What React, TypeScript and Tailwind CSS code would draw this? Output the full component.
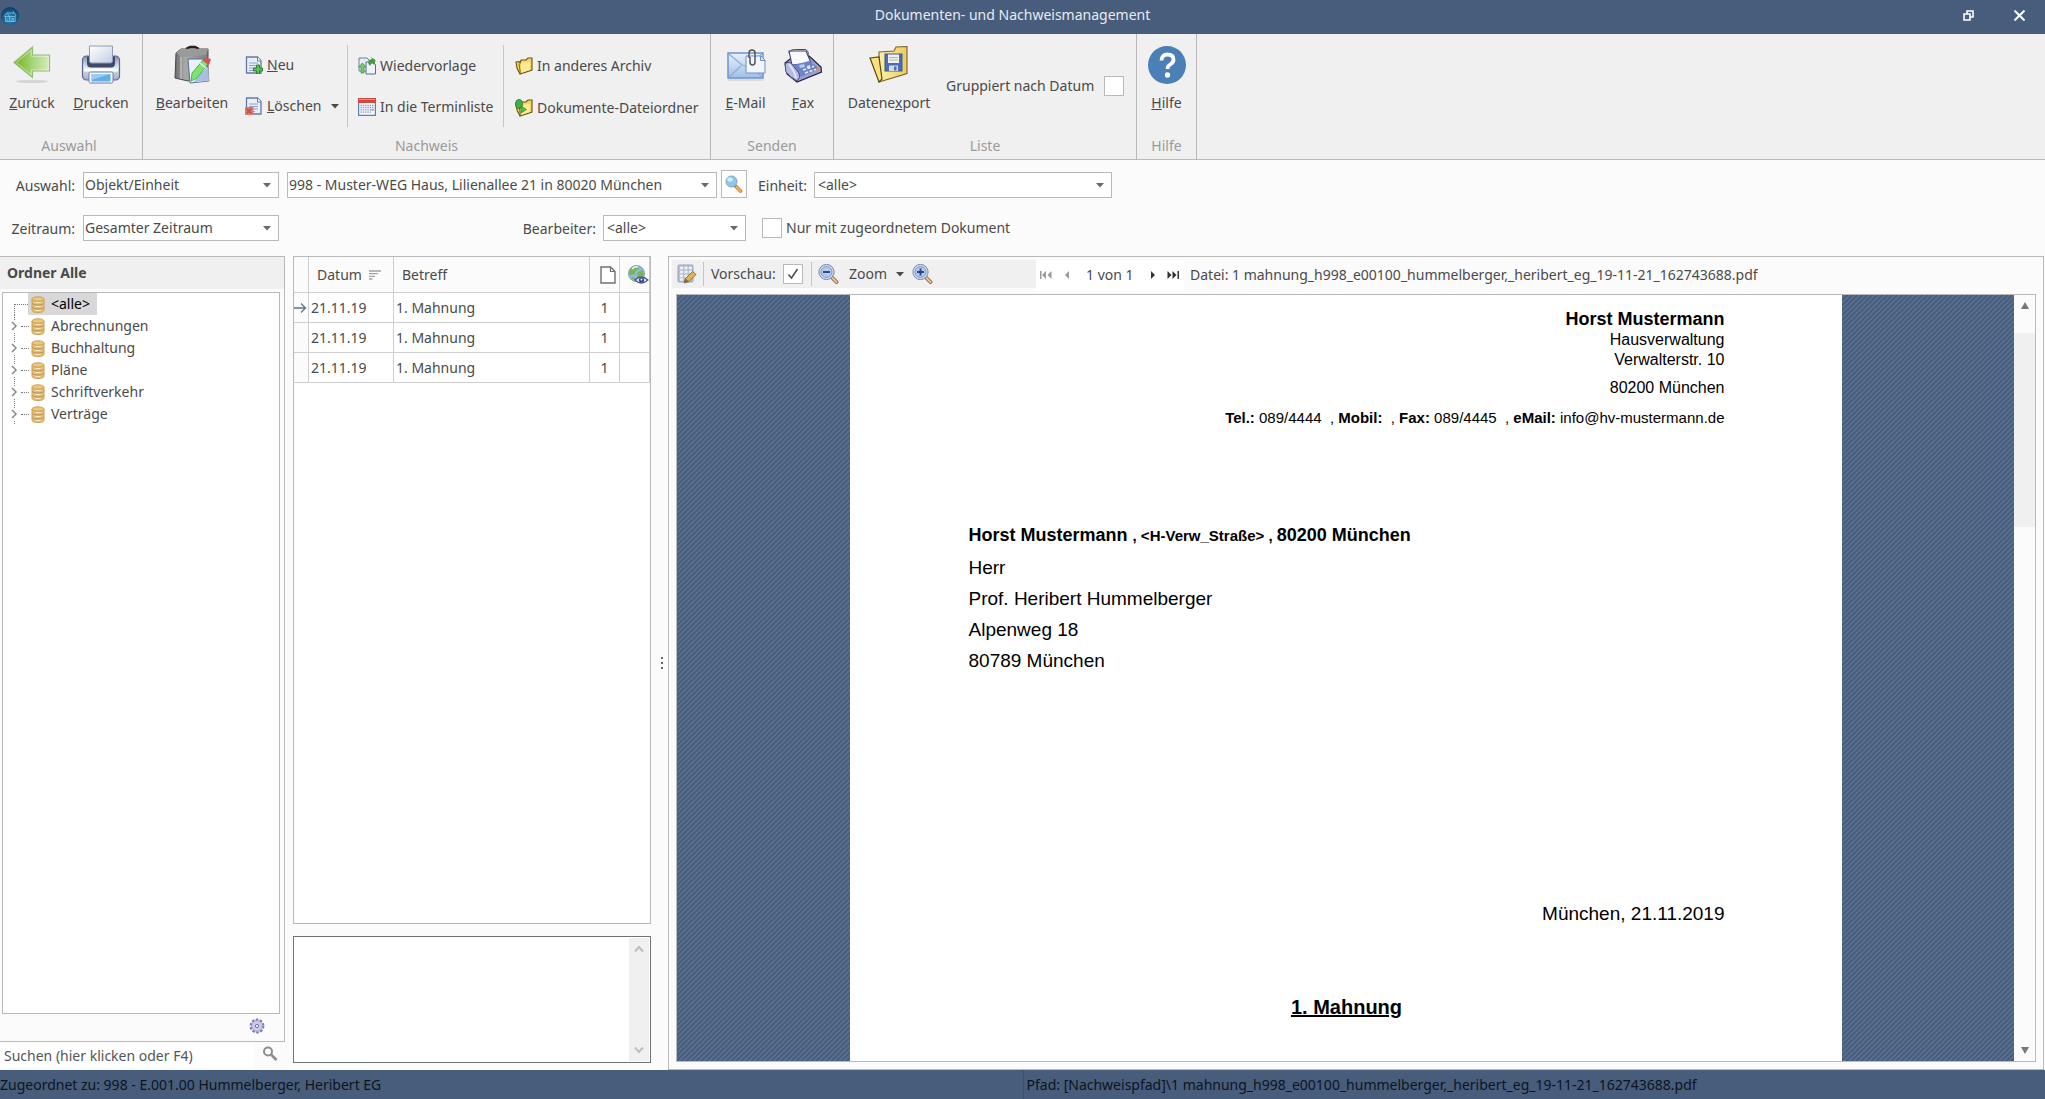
import { useState } from "react";
import type { ReactNode } from "react";
import clsx from "clsx";

const folders = ["Abrechnungen", "Buchhaltung", "Pläne", "Schriftverkehr", "Verträge"];

const records = [
  { id: 1, date: "21.11.19", subject: "1. Mahnung", files: 1 },
  { id: 2, date: "21.11.19", subject: "1. Mahnung", files: 1 },
  { id: 3, date: "21.11.19", subject: "1. Mahnung", files: 1 },
];

/* ---------- icons ---------- */

function AppLogo() {
  return (
    <svg viewBox="0 0 20 20" className="h-5 w-5">
      <defs>
        <radialGradient id="logo" cx="50%" cy="65%" r="60%">
          <stop offset="0" stopColor="#2f8fc4" />
          <stop offset="1" stopColor="#0d3f6b" />
        </radialGradient>
      </defs>
      <circle cx="10" cy="9" r="9" fill="url(#logo)" />
      <path d="M4 9.500 7 6h7.500l1.500 3M4.500 9.500h5v5h-4v-5M9.500 9.500 7.200 6.200M9.500 9.500h5.700v5H9.500M7 11.500v3M12 14.500v-3h1.600v3M13.500 6V4.500" fill="none" stroke="#7fc4e6" strokeWidth="0.8" />
    </svg>
  );
}

function BackIcon() {
  return (
    <svg viewBox="0 0 40 40" className="h-10 w-10">
      <defs>
        <linearGradient id="back" x1="0" x2="1">
          <stop offset="0" stopColor="#6fb21c" />
          <stop offset="0.55" stopColor="#a9d67c" />
          <stop offset="1" stopColor="#d5ebc0" />
        </linearGradient>
      </defs>
      <ellipse cx="20" cy="36.5" rx="16" ry="1.6" fill="#c9c9c9" opacity="0.7" />
      <path d="M2 17.5 20.5 2v8h17v16h-17v6.5Z" fill="url(#back)" stroke="#93be70" strokeWidth="1.2" />
      <path d="M4.5 17.5 19.3 5v6.300h17v13.500h-17V30Z" fill="none" stroke="#fff" strokeOpacity="0.45" />
    </svg>
  );
}

function PrinterIcon() {
  return (
    <svg viewBox="0 0 40 40" className="h-10 w-10">
      <defs>
        <linearGradient id="prBody" x1="0" y1="0" x2="0" y2="1">
          <stop offset="0" stopColor="#7f8cb0" />
          <stop offset="0.45" stopColor="#dfe4f0" />
          <stop offset="1" stopColor="#a3aecb" />
        </linearGradient>
        <linearGradient id="prPaper" x1="0" y1="0" x2="1" y2="1">
          <stop offset="0" stopColor="#ffffff" />
          <stop offset="1" stopColor="#c3cde2" />
        </linearGradient>
      </defs>
      <rect x="1.500" y="11" width="37" height="24" rx="4" fill="url(#prBody)" stroke="#5d6b93" strokeWidth="1.2" />
      <path d="M6 11.5h28v7q0 4-4 4H10q-4 0-4-4Z" fill="#3d4968" />
      <path d="M8.500 1h23v15q0 2-2 2h-19q-2 0-2-2Z" fill="url(#prPaper)" stroke="#8f9bbb" />
      <path d="M3 25h34" stroke="#fff" strokeWidth="3" />
      <rect x="8" y="27" width="24" height="11" rx="1.500" fill="#f5f9fd" stroke="#6f7da5" />
      <path d="M10.500 29h19v7.500h-19Z" fill="#5fb0e4" />
      <path d="M10.500 29h19l-19 6Z" fill="#96cdf0" />
    </svg>
  );
}

function EditIcon() {
  return (
    <svg viewBox="0 0 40 40" className="h-10 w-10">
      <defs>
        <linearGradient id="case" x1="0" x2="1">
          <stop offset="0" stopColor="#6a6a6a" />
          <stop offset="0.3" stopColor="#a9a9a9" />
          <stop offset="1" stopColor="#7e7e7e" />
        </linearGradient>
      </defs>
      <path d="M15 5V3.500L18 2h5l3 1.500V5" fill="none" stroke="#222" strokeWidth="2.400" />
      <path d="M4 8 9 4h27v27l-20 5-13-3Z" fill="url(#case)" stroke="#4a4a4a" />
      <path d="M4 8 9 4h27l-2 6-24 2Z" fill="#9a9a9a" />
      <path d="M9 12v22" stroke="#d0d0d0" />
      <path d="M16 14h18l3 22-19 2Z" fill="#e9f1fb" stroke="#5c6f9b" />
      <path d="M26 30 36 22l1 14-15 1Z" fill="#a9bfe0" />
      <path d="m19 36 1-8 11-13 5 4-11 14Z" fill="#7de36f" stroke="#3aa83a" strokeWidth="0.8" />
      <path d="m30 15 4-2 5 1-2 6Z" fill="#d9514c" />
      <path d="m28 18 5.500 4.500" stroke="#f3f3f3" strokeWidth="1.500" />
    </svg>
  );
}

function DocBase() {
  return (
    <>
      <path d="M1.500 1h11L16 4.500V17H1.500Z" fill="#e9eef7" stroke="#6678a5" strokeWidth="1.300" />
      <path d="M12.500 1v4H16" fill="#fff" stroke="#6678a5" />
      <path d="M4 7h9M4 9.500h9M4 12h9M4 14.500h6" stroke="#93a0c0" />
    </>
  );
}

function NewDocIcon() {
  return (
    <svg viewBox="0 0 18 18" className="h-[18px] w-[18px]">
      <DocBase />
      <path d="M11.500 9h3v3h3v3h-3v3h-3v-3h-3v-3h3Z" fill="#5fbf58" stroke="#1f7a24" strokeWidth="0.9" />
    </svg>
  );
}

function DeleteDocIcon() {
  return (
    <svg viewBox="0 0 18 18" className="h-[18px] w-[18px]">
      <DocBase />
      <path d="M0 10h8.500v8H0Z" fill="#e07a6f" />
      <path d="m1.500 11.500 5 5M6.500 11.500l-5 5" stroke="#c4574d" strokeWidth="1.800" />
    </svg>
  );
}

function ResubmitIcon() {
  return (
    <svg viewBox="0 0 18 18" className="h-[18px] w-[18px]">
      <path d="M1 1h8l2 2v11H1Z" fill="#e6ecf6" stroke="#6f7ea5" />
      <path d="M8 5h7l2.500 2.500V17H8Z" fill="#eef2f9" stroke="#5d6c94" />
      <path d="M10 6q1-4 4-4l-1-2 4.500 3-1 5-2-1.500Q13 6 12 9Z" fill="#4b9a48" />
      <path d="m.500 10 4-4 3.500 4H6v6H3v-6Z" fill="#7bc578" stroke="#3b8c3c" strokeWidth="0.7" />
    </svg>
  );
}

function CalendarIcon() {
  return (
    <svg viewBox="0 0 18 18" className="h-[18px] w-[18px]">
      <rect x="0.600" y="0.600" width="16.800" height="16.800" fill="#f3f6fb" stroke="#5c7fb5" strokeWidth="1.200" />
      <path d="M0 0h18v5H0Z" fill="#cf4a3c" />
      <path d="M1 1.500h16" stroke="#e99087" />
      <path d="M2.500 7.500h13M2.500 9.700h13M2.500 11.900h13M2.500 14.100h11" stroke="#8fa2cf" strokeDasharray="1.400 0.900" strokeWidth="1.300" />
      <path d="M13 11.900h3" stroke="#e48e84" strokeWidth="1.300" />
    </svg>
  );
}

function FolderIcon({ arrow = false }: { arrow?: boolean }) {
  return (
    <svg viewBox="0 0 18 18" className="h-[18px] w-[18px]">
      <path d="M1 5l3-.500 1 1.500 1-3h5l2-2h4v12L5 17 2 11Z" fill="#f3d665" stroke="#6b5212" strokeWidth="1.100" />
      <path d="m6 6 9-1v8l-9 3Z" fill="#fbea95" />
      <path d="M4 6.500 5.500 17" stroke="#8a6a14" />
      {arrow && (
        <>
          <ellipse cx="4" cy="5" rx="3.500" ry="4.500" fill="#46ad45" stroke="#226f25" strokeWidth="0.7" />
          <path d="M6 7 11.500 10.500 6 14Z" fill="#4fc04b" stroke="#2a7f2b" strokeWidth="0.7" />
        </>
      )}
    </svg>
  );
}

function MailIcon() {
  return (
    <svg viewBox="0 0 40 40" className="h-10 w-10">
      <defs>
        <linearGradient id="mail" x1="0" y1="0" x2="0" y2="1">
          <stop offset="0" stopColor="#e8f1fc" />
          <stop offset="1" stopColor="#9fc0e8" />
        </linearGradient>
      </defs>
      <path d="M2 34h36v2H2Z" fill="#c9cdd6" opacity="0.6" />
      <rect x="2" y="8" width="35" height="25" fill="url(#mail)" stroke="#6e92ca" strokeWidth="1.500" />
      <path d="m3 9 13 11q3 2 6 0L36 9M3 32l12-11M36 32 25 21" fill="none" stroke="#8fabd6" strokeWidth="1.200" />
      <path d="M20 11h15l4 4v13H20Z" fill="#f1f6fd" stroke="#6f90c6" />
      <path d="M34.500 11v4.500H39" fill="#cfdff4" stroke="#6f90c6" />
      <path d="M23 13V8q0-3 3-3t3 3v9q0 3-2.500 3T24 17v-5" fill="none" stroke="#555" strokeWidth="1.500" />
    </svg>
  );
}

function FaxIcon() {
  return (
    <svg viewBox="0 0 40 40" className="h-10 w-10">
      <path d="M2 18 7 14l19-3 12 11 .500 5L14 37 4 29Z" fill="#9aa0d0" stroke="#23264a" strokeWidth="1.200" />
      <path d="M6 6h17l5 12-19 2Z" fill="#f7f9fd" stroke="#40466c" strokeWidth="1.100" />
      <path d="M5.500 7.500q3-3.500 7-3h10q3 1 3 5" fill="none" stroke="#40466c" />
      <path d="m11 20 15-4 11 8-20 8Z" fill="#6f84c6" />
      <path d="m16 20 5-1 1 3-5 1Z" fill="#b3c8f3" />
      <path d="m20 25 3-1m1.500-.500 3-1m1.500-.500 2-.600M22 28l3-1m1.500-.500 3-1m1.500-.500 2-.600M24 22l3-1" stroke="#e5ecff" strokeWidth="1.800" />
      <path d="M2 19q3-3 6-1l8 10q2 5-2 8-6-3-11-9Z" fill="#b4bbe2" stroke="#474d80" />
      <path d="M6 19q6 8 7 14" fill="none" stroke="#e3e7f7" strokeWidth="2" />
      <circle cx="35" cy="24" r="1.800" fill="#e7885d" />
    </svg>
  );
}

function ExportIcon() {
  return (
    <svg viewBox="0 0 40 40" className="h-10 w-10">
      <defs>
        <linearGradient id="exp" x1="0" x2="1">
          <stop offset="0" stopColor="#fdf0a6" />
          <stop offset="1" stopColor="#edcb60" />
        </linearGradient>
      </defs>
      <path d="m10 7 15-1 2-4 11-.500v27L10 37Z" fill="url(#exp)" stroke="#7b6324" strokeWidth="1.100" />
      <path d="m1 13 9-1 3 22-3 3Z" fill="#f9e27c" stroke="#5a4714" strokeWidth="1.200" />
      <rect x="16" y="9" width="17" height="17" fill="#4a6fb6" stroke="#3a5794" />
      <rect x="19" y="9.500" width="11" height="8.500" fill="#f2f2f2" />
      <path d="M20 12.500h9M20 15h9" stroke="#b1b1b1" />
      <rect x="20" y="20.500" width="9" height="5.500" fill="#d9d9d9" />
      <rect x="25" y="21.500" width="2.500" height="4" fill="#4a6fb6" />
    </svg>
  );
}

function HelpIcon() {
  return (
    <svg viewBox="0 0 40 40" className="h-10 w-10">
      <circle cx="20" cy="20" r="19" fill="#4a7fb7" />
      <path d="M14.500 15.500q0-6 6-6t6 5q0 3-3.300 5-2.700 1.600-2.700 4.500" fill="none" stroke="#fff" strokeWidth="3.800" />
      <circle cx="20.500" cy="30" r="2.700" fill="#fff" />
    </svg>
  );
}

function LookupIcon() {
  return (
    <svg viewBox="0 0 18 18" className="h-[18px] w-[18px]">
      <path d="m10.500 11 5 5" stroke="#c77a2a" strokeWidth="3.600" strokeLinecap="round" />
      <path d="m11.500 12 4 4" stroke="#f2b467" strokeWidth="1.800" strokeLinecap="round" />
      <circle cx="6.500" cy="6.500" r="5.500" fill="#8cc6e8" stroke="#79a8c6" />
      <ellipse cx="5" cy="4.500" rx="2.800" ry="2" fill="#d8effb" />
    </svg>
  );
}

function ZoomIcon({ plus = false }: { plus?: boolean }) {
  return (
    <svg viewBox="0 0 21 20" className="h-5 w-[21px]">
      <path d="m14 13.500 4.500 4.500" stroke="#8b5f35" strokeWidth="3.800" strokeLinecap="round" />
      <path d="m14.500 14 4 4" stroke="#ecc59a" strokeWidth="2" strokeLinecap="round" />
      <circle cx="8.500" cy="8" r="7.600" fill="#cdd9ee" stroke="#7c88a6" />
      <circle cx="8.500" cy="8" r="5.400" fill="#b3cbee" stroke="#7d98c6" />
      <path d={plus ? "M5 8h7M8.500 4.500v7" : "M5 8h7"} stroke="#27457f" strokeWidth="1.900" />
    </svg>
  );
}

function DesignIcon() {
  return (
    <svg viewBox="0 0 20 20" className="h-5 w-5">
      <rect x="1" y="1" width="15" height="17" rx="1" fill="#b7c1d6" stroke="#98a3bd" />
      <path d="M3 4h3M7.500 4h3M12 4h3M3 8h3M7.500 8h3M12 8h3M3 12h3M7.500 12h3M12 12h3M3 15.500h3" stroke="#eef2f8" strokeWidth="2.400" />
      <path d="m7 19 1.500-4.500L15.500 7.500l3.500 3-7 7Z" fill="#e2b455" stroke="#866524" strokeWidth="0.900" />
      <path d="m7 19 1.500-4.500 3.500 3Z" fill="#7b6a54" />
    </svg>
  );
}

function BarrelIcon() {
  return (
    <svg viewBox="0 0 14 17" className="h-[17px] w-[14px] shrink-0">
      <path d="M1 3v11q0 2.500 6 2.500t6-2.500V3Z" fill="#e9bf68" stroke="#c9a05e" />
      <ellipse cx="7" cy="3" rx="6" ry="2.200" fill="#eec778" stroke="#c9a05e" />
      <path d="M1 7q0 2 6 2t6-2M1 11q0 2 6 2t6-2" fill="none" stroke="#b99360" />
      <path d="M4.500 6.500h5M4.500 10.500h5M4.500 14.500h5" stroke="#f8e7bf" />
    </svg>
  );
}

function GlobeIcon() {
  return (
    <svg viewBox="0 0 21 20" className="h-5 w-[21px]">
      <circle cx="8.500" cy="8.500" r="8" fill="#8fbcd9" stroke="#6d8f8c" strokeWidth="0.8" />
      <path d="M2 5q4-5 8-4l1 3-3 2-1 3-4 1-2-1ZM10 7l4-2 2 4-3 5-4-2ZM3 12l4 1 1 3q-3-.500-5-4Z" fill="#7bb35c" />
      <path d="M4 4q3-3 6-2" stroke="#e8f6ff" strokeWidth="1.600" fill="none" />
      <path d="M7 15q6-6 13 0-7 6-13 0Z" fill="#e9edf8" stroke="#4a5690" strokeWidth="1.200" />
      <circle cx="13.500" cy="15" r="2.600" fill="#34468c" />
      <circle cx="13.500" cy="14.500" r="1" fill="#fff" />
    </svg>
  );
}

function GearIcon() {
  return (
    <svg viewBox="0 0 16 16" className="h-4 w-4">
      <circle cx="8" cy="8" r="6" fill="none" stroke="#7a7ab0" strokeWidth="2.800" strokeDasharray="2.400 1.370" />
      <circle cx="8" cy="8" r="5.400" fill="#c9c9e8" stroke="#9c9cca" strokeWidth="0.800" />
      <circle cx="8" cy="8" r="1.600" fill="#fff" stroke="#6c6ca3" />
    </svg>
  );
}

function Caret({ className }: { className?: string }) {
  return (
    <svg viewBox="0 0 8 5" className={clsx("h-[5px] w-2", className)}>
      <path d="M0 0h8L4 4.500Z" fill="currentColor" />
    </svg>
  );
}

function NavIcon({ d, className }: { d: string; className?: string }) {
  return (
    <svg viewBox="0 0 12 10" className={clsx("h-[10px] w-3", className)}>
      <path d={d} fill="currentColor" />
    </svg>
  );
}

// diagonal hatching behind the page, 5px repeat
function Hatching() {
  return (
    <svg className="absolute inset-0 h-full w-full" shapeRendering="crispEdges">
      <pattern id="hatch" width="5" height="5" patternUnits="userSpaceOnUse">
        <path d="M0 0h5v5H0Z" fill="#566e8c" />
        <path d="M4 0h1v1H4ZM3 1h1v1H3ZM2 2h1v1H2ZM1 3h1v1H1ZM0 4h1v1H0Z" fill="#435878" />
        <path d="M0 0h1v1H0ZM4 1h1v1H4ZM3 2h1v1H3ZM2 3h1v1H2ZM1 4h1v1H1Z" fill="#485e7d" />
      </pattern>
      <rect width="100%" height="100%" fill="url(#hatch)" />
    </svg>
  );
}

/* ---------- controls ---------- */

function RibbonGroup({ title, className, children }: { title: string; className?: string; children: ReactNode }) {
  return (
    <section className={clsx("flex flex-col border-r border-[#b9b9b9] pb-[3px]", className)}>
      <div className="flex flex-1 items-start pt-[11px]">{children}</div>
      <h2 className="text-center leading-5 text-[#9a9a9a]">{title}</h2>
    </section>
  );
}

function BigButton({ icon, className, children }: { icon: ReactNode; className?: string; children: ReactNode }) {
  return (
    <button type="button" className={clsx("flex flex-col items-center gap-2 whitespace-nowrap", className)}>
      {icon}
      <span className="leading-5">{children}</span>
    </button>
  );
}

function SmallButton({ icon, children }: { icon: ReactNode; children: ReactNode }) {
  return (
    <button type="button" className="flex h-[42px] items-center gap-1 whitespace-nowrap">
      {icon}
      <span>{children}</span>
    </button>
  );
}

function Select({ id, value, className, pad = "pl-[1px]" }: { id: string; value: string; className?: string; pad?: string }) {
  return (
    <div className={clsx("relative h-[26px]", className)}>
      <select id={id} className={clsx("h-full w-full appearance-none border border-[#b9b9b9] bg-white leading-6", pad)}>
        <option>{value}</option>
      </select>
      <Caret className="pointer-events-none absolute right-2 top-[11px] text-[#6a6a6a]" />
    </div>
  );
}

function Checkbox({ id, checked, onChange }: { id: string; checked: boolean; onChange: (v: boolean) => void }) {
  return (
    <span className="relative h-5 w-5 shrink-0">
      <input
        id={id}
        type="checkbox"
        checked={checked}
        onChange={e => onChange(e.target.checked)}
        className="block h-5 w-5 appearance-none border border-[#b9b9b9] bg-white"
      />
      {checked && (
        <svg viewBox="0 0 20 20" className="pointer-events-none absolute inset-0 h-5 w-5">
          <path d="m5.500 10.500 3 3.500 6-9" fill="none" stroke="#4a4a4a" strokeWidth="1.500" />
        </svg>
      )}
    </span>
  );
}

/* ---------- page parts ---------- */

function TitleBar() {
  return (
    <header className="grid h-[34px] shrink-0 grid-cols-[1fr_auto_1fr] items-center bg-[#485c7b] pr-5 text-[#e6ebf2]">
      <AppLogo />
      <h1 className="pb-1">Dokumenten- und Nachweismanagement</h1>
      <div className="flex items-center justify-end gap-10 pb-1 text-white">
        <button type="button" aria-label="Verkleinern">
          <svg viewBox="0 0 11 11" className="h-[11px] w-[11px]">
            <path d="M1 4h6v6H1ZM4 4V1h6v6H7" fill="none" stroke="currentColor" strokeWidth="1.600" />
          </svg>
        </button>
        <button type="button" aria-label="Schließen">
          <svg viewBox="0 0 11 11" className="h-[11px] w-[11px]">
            <path d="m.500.500 10 10M10.500.500l-10 10" stroke="currentColor" strokeWidth="2" />
          </svg>
        </button>
      </div>
    </header>
  );
}

function Ribbon() {
  const [grouped, setGrouped] = useState(false);

  return (
    <div className="flex h-[126px] shrink-0 border-b border-[#b9b9b9] bg-[#f0f0f0]">
      <RibbonGroup title="Auswahl" className="w-[143px] pr-1">
        <BigButton icon={<BackIcon />} className="w-16"><u>Z</u>urück</BigButton>
        <BigButton icon={<PrinterIcon />} className="w-[74px]"><u>D</u>rucken</BigButton>
      </RibbonGroup>

      <RibbonGroup title="Nachweis" className="w-[568px]">
        <BigButton icon={<EditIcon />} className="w-[98px]"><u>B</u>earbeiten</BigButton>
        <div className="flex h-[82px] w-[107px] flex-col border-r border-[#c6c6c6] pl-1">
          <SmallButton icon={<NewDocIcon />}><u>N</u>eu</SmallButton>
          <div className="flex items-center gap-[10px]">
            <SmallButton icon={<DeleteDocIcon />}><u>L</u>öschen</SmallButton>
            <button type="button" aria-label="Weitere Löschoptionen"><Caret /></button>
          </div>
        </div>
        <div className="flex h-[82px] w-[156px] flex-col border-r border-[#c6c6c6] pl-[10px]">
          <SmallButton icon={<ResubmitIcon />}>Wiedervorlage</SmallButton>
          <SmallButton icon={<CalendarIcon />}>In die Terminliste</SmallButton>
        </div>
        <div className="flex flex-col pl-[11px]">
          <SmallButton icon={<FolderIcon />}>In anderes Archiv</SmallButton>
          <SmallButton icon={<FolderIcon arrow />}>Dokumente-Dateiordner</SmallButton>
        </div>
      </RibbonGroup>

      <RibbonGroup title="Senden" className="w-[123px]">
        <BigButton icon={<MailIcon />} className="ml-1 w-[61px]"><u>E</u>-Mail</BigButton>
        <BigButton icon={<FaxIcon />} className="w-[54px]"><u>F</u>ax</BigButton>
      </RibbonGroup>

      <RibbonGroup title="Liste" className="w-[303px]">
        <BigButton icon={<ExportIcon />} className="w-[110px]">Datene<u>x</u>port</BigButton>
        <div className="flex h-[82px] flex-1 items-center justify-between pr-3">
          <label htmlFor="grouped" className="whitespace-nowrap pl-[2px]">Gruppiert nach Datum</label>
          <Checkbox id="grouped" checked={grouped} onChange={setGrouped} />
        </div>
      </RibbonGroup>

      <RibbonGroup title="Hilfe" className="w-[60px]">
        <BigButton icon={<HelpIcon />} className="w-full"><u>H</u>ilfe</BigButton>
      </RibbonGroup>
    </div>
  );
}

function Filters() {
  const [onlyLinked, setOnlyLinked] = useState(false);
  const label = "whitespace-nowrap text-right leading-6";

  return (
    <div className="flex shrink-0 flex-col gap-[15px] pb-[15px] pt-[10px]">
      <div className="flex h-7 items-end">
        <label htmlFor="scope" className={clsx(label, "w-[75px]")}>Auswahl:</label>
        <Select id="scope" value="Objekt/Einheit" className="ml-2 w-[196px]" />
        <Select id="object" value="998 - Muster-WEG Haus, Lilienallee 21 in 80020 München" className="ml-2 w-[430px]" />
        <button type="button" aria-label="Objekt suchen" className="ml-1 flex h-7 w-[26px] items-center justify-center border border-[#b9b9b9] bg-white">
          <LookupIcon />
        </button>
        <label htmlFor="unit" className={clsx(label, "w-[60px]")}>Einheit:</label>
        <Select id="unit" value="<alle>" className="ml-[7px] w-[298px]" pad="pl-[3px]" />
      </div>
      <div className="flex h-7 items-end">
        <label htmlFor="period" className={clsx(label, "w-[75px]")}>Zeitraum:</label>
        <Select id="period" value="Gesamter Zeitraum" className="ml-2 w-[196px]" />
        <label htmlFor="clerk" className={clsx(label, "w-[317px]")}>Bearbeiter:</label>
        <Select id="clerk" value="<alle>" className="ml-[7px] w-[143px]" pad="pl-[3px]" />
        <div className="ml-4 flex h-[26px] items-center gap-1">
          <Checkbox id="linked" checked={onlyLinked} onChange={setOnlyLinked} />
          <label htmlFor="linked">Nur mit zugeordnetem Dokument</label>
        </div>
      </div>
    </div>
  );
}

function FolderTree() {
  return (
    <aside className="flex w-[285px] shrink-0 flex-col">
      <div className="flex flex-1 flex-col border-b border-r border-t border-[#b9b9b9]">
        <h2 className="bg-[#f0f0f0] pl-[7px] font-bold leading-8 text-[#4a4a4a]">Ordner Alle</h2>
        <ul className="ml-[2px] mr-1 mt-[3px] flex-1 border border-[#b9b9b9] bg-white">
          <li className="flex h-[22px]">
            <span className="ml-[11px] mt-[11px] w-[14px] border-l border-t border-dotted border-[#777]" />
            <button type="button" className="flex items-center gap-[6px] bg-[#d8d8d8] pl-[3px] pr-[7px] text-black">
              <BarrelIcon />
              {"<alle>"}
            </button>
          </li>
          {folders.map(name => (
            <li key={name} className="flex h-[22px] items-center">
              <button type="button" aria-label={`${name} aufklappen`} className="ml-[7px] h-[22px] w-[9px]">
                <svg viewBox="0 0 9 22" className="h-[22px] w-[9px]">
                  <path d="m2 7 4 4-4 4" fill="none" stroke="#8a8a8a" strokeWidth="1.500" />
                  <path d="M4.500 0v5M4.500 18v4" stroke="#777" strokeDasharray="1 1" />
                </svg>
              </button>
              <span className="ml-[2px] w-2 border-t border-dotted border-[#777]" />
              <button type="button" className="ml-[2px] flex items-center gap-[6px]">
                <BarrelIcon />
                {name}
              </button>
            </li>
          ))}
        </ul>
        <div className="flex h-[27px] items-start justify-end pr-[19px] pt-1">
          <button type="button" aria-label="Einstellungen"><GearIcon /></button>
        </div>
      </div>
      <div className="flex h-7 items-start pt-[2px]">
        <input
          aria-label="Suchen"
          placeholder="Suchen (hier klicken oder F4)"
          className="h-[23px] w-[254px] bg-white pl-1 placeholder:text-[#555]"
        />
        <svg viewBox="0 0 16 16" className="ml-2 mt-[2px] h-4 w-4">
          <circle cx="6" cy="5.500" r="4" fill="none" stroke="#8d8d8d" strokeWidth="2" />
          <path d="m9 8.500 5.500 5.500" stroke="#8d8d8d" strokeWidth="2.600" />
        </svg>
      </div>
    </aside>
  );
}

function RecordList() {
  const head = "h-9 border-b border-r border-[#cfcfcf] bg-[#fbfbfb] p-0 text-left font-normal";
  const cell = "h-[30px] border-b border-r border-[#cfcfcf] p-0";

  return (
    <div className="ml-2 flex w-[358px] shrink-0 flex-col pb-[7px]">
      <div className="flex-1 border border-[#b9b9b9] bg-white">
        <table className="w-full table-fixed border-separate border-spacing-0">
          <colgroup>
            <col className="w-[15px]" />
            <col className="w-[85px]" />
            <col />
            <col className="w-[30px]" />
            <col className="w-[30px]" />
          </colgroup>
          <thead>
            <tr>
              <th className={head} aria-label="Markierung" />
              <th className={head}>
                <span className="flex items-center gap-[7px] pl-2">
                  Datum
                  <svg viewBox="0 0 12 10" className="h-[10px] w-3">
                    <path d="M0 1h12M0 3.700h9M0 6.400h6M0 9h3.500" stroke="#a3a3a3" strokeWidth="1.300" />
                  </svg>
                </span>
              </th>
              <th className={clsx(head, "pl-2")}>Betreff</th>
              <th className={head} aria-label="Dokumente">
                <svg viewBox="0 0 16 18" className="ml-[10px] h-[18px] w-4">
                  <path d="M1 1h9.500L15 5.500V17H1Z" fill="#fff" stroke="#707070" strokeWidth="1.400" />
                  <path d="M10.500 1v4.500H15" fill="none" stroke="#707070" strokeWidth="1.200" />
                </svg>
              </th>
              <th className={head} aria-label="Online"><span className="flex justify-end"><GlobeIcon /></span></th>
            </tr>
          </thead>
          <tbody>
            {records.map((r, i) => (
              <tr key={r.id}>
                <td className={clsx(cell, "bg-[#fbfbfb]")}>
                  {i === 0 && (
                    <svg viewBox="0 0 14 12" className="h-3 w-[14px]">
                      <path d="M0 6h11M7 1.500 11.500 6 7 10.500" fill="none" stroke="#64748f" strokeWidth="1.300" />
                    </svg>
                  )}
                </td>
                <td className={clsx(cell, "pl-[2px]")}>{r.date}</td>
                <td className={clsx(cell, "pl-[2px]")}>{r.subject}</td>
                <td className={clsx(cell, "text-center")}>{r.files}</td>
                <td className={cell} />
              </tr>
            ))}
          </tbody>
        </table>
      </div>
      <div className="mt-3 flex h-[127px] border border-[#707376] bg-white">
        <textarea aria-label="Bemerkung" className="flex-1 resize-none outline-none" />
        <div className="my-[1px] mr-[1px] flex w-5 flex-col items-center justify-between bg-[#f0f0f0] py-[7px] text-[#bdbdbd]">
          <svg viewBox="0 0 10 8" className="h-2 w-[10px]"><path d="m1 6.500 4-4.500 4 4.500" fill="none" stroke="currentColor" strokeWidth="2" /></svg>
          <svg viewBox="0 0 10 8" className="h-2 w-[10px]"><path d="m1 1.500 4 4.500 4-4.500" fill="none" stroke="currentColor" strokeWidth="2" /></svg>
        </div>
      </div>
    </div>
  );
}

function Letter() {
  return (
    <article className="relative mx-auto w-[992px] bg-white pl-[119px] pr-[117px] pt-[13px] font-['Liberation_Sans',Arial,sans-serif] text-[19px] leading-[31px] text-black">
      <header className="text-right text-base leading-5">
        <p className="text-lg font-bold leading-[22px]">Horst Mustermann</p>
        <p>Hausverwaltung</p>
        <p>Verwalterstr. 10</p>
        <p className="mt-2">80200 München</p>
        <p className="mt-[10px] whitespace-pre text-[15px]">
          <b>Tel.:</b>{" 089/4444  , "}<b>Mobil:</b>{"  , "}<b>Fax:</b>{" 089/4445  , "}<b>eMail:</b>{" info@hv-mustermann.de"}
        </p>
      </header>
      <p className="mt-[91px] text-lg font-bold leading-8">
        Horst Mustermann <span className="text-[15px]">, &lt;H-Verw_Straße&gt; , </span>80200 München
      </p>
      <p>Herr</p>
      <p>Prof. Heribert Hummelberger</p>
      <p>Alpenweg 18</p>
      <p>80789 München</p>
      <p className="mt-[224px] text-right leading-7">München, 21.11.2019</p>
      <h2 className="mt-[63px] text-center text-xl font-bold leading-8 underline">1. Mahnung</h2>
    </article>
  );
}

function Preview() {
  const [visible, setVisible] = useState(true);

  return (
    <main className="mr-[1px] flex min-w-0 flex-1 flex-col border border-[#b9b9b9] bg-[#fbfbfb]">
      <div className="flex h-[37px] shrink-0 items-start pl-[3px] pt-[3px]">
        <div className="flex h-7 w-[364px] items-center bg-[#f0f0f0] pl-[5px]">
          <button type="button" aria-label="Layout bearbeiten"><DesignIcon /></button>
          <span className="ml-[6px] h-6 w-px bg-[#c6c6c6]" />
          <label htmlFor="preview" className="ml-[7px] w-16">Vorschau:</label>
          <span className="ml-2"><Checkbox id="preview" checked={visible} onChange={setVisible} /></span>
          <span className="ml-2 h-6 w-px bg-[#c6c6c6]" />
          <button type="button" aria-label="Verkleinern" className="ml-[6px]"><ZoomIcon /></button>
          <button type="button" className="ml-[10px] flex items-center gap-[9px]">Zoom <Caret /></button>
          <button type="button" aria-label="Vergrößern" className="ml-2"><ZoomIcon plus /></button>
        </div>
        <nav className="flex h-[30px] w-[148px] items-center bg-white pl-1 text-[#4a4a4a]">
          <button type="button" aria-label="Erste Seite"><NavIcon d="M0 1h1.500v8H0ZM6 1v8L2 5ZM11.500 1v8l-4-4Z" className="text-[#9a9a9a]" /></button>
          <button type="button" aria-label="Vorige Seite" className="ml-[10px]"><NavIcon d="M7 1v8L3 5Z" className="text-[#9a9a9a]" /></button>
          <span className="ml-3 whitespace-nowrap">1 von 1</span>
          <button type="button" aria-label="Nächste Seite" className="ml-[13px]"><NavIcon d="M4 1v8l4-4Z" className="text-[#333]" /></button>
          <button type="button" aria-label="Letzte Seite" className="ml-2"><NavIcon d="M.500 1v8l4-4ZM5.500 1v8l4-4ZM10.500 1H12v8h-1.500Z" className="text-[#333]" /></button>
        </nav>
        <p className="ml-[6px] truncate leading-[30px]">Datei: 1 mahnung_h998_e00100_hummelberger,_heribert_eg_19-11-21_162743688.pdf</p>
      </div>
      <div className="mx-[7px] mb-[7px] flex min-h-0 flex-1 border border-[#b9b9b9]">
        <div className="relative flex min-w-0 flex-1 overflow-hidden bg-[#546b89]">
          <Hatching />
          {visible && <Letter />}
        </div>
        <div className="flex w-[21px] shrink-0 flex-col items-center text-[#777]">
          <svg viewBox="0 0 8 7" className="mt-[7px] h-[7px] w-2"><path d="M4 0 8 7H0Z" fill="currentColor" /></svg>
          <div className="mt-6 h-[194px] w-full bg-[#f0f0f0]" />
          <div className="flex-1" />
          <svg viewBox="0 0 8 7" className="mb-[7px] h-[7px] w-2"><path d="M0 0h8L4 7Z" fill="currentColor" /></svg>
        </div>
      </div>
    </main>
  );
}

export default function App() {
  return (
    <div className="flex h-screen flex-col overflow-hidden bg-[#fbfbfb] font-['Noto_Sans',sans-serif] text-sm text-[#4a4a4a]">
      <TitleBar />
      <Ribbon />
      <Filters />
      <div className="flex min-h-0 flex-1">
        <FolderTree />
        <RecordList />
        <div className="flex w-[17px] shrink-0 flex-col items-center justify-center gap-[3px] pl-1">
          <span className="h-[2px] w-[2px] bg-[#666]" />
          <span className="h-[2px] w-[2px] bg-[#666]" />
          <span className="h-[2px] w-[2px] bg-[#666]" />
        </div>
        <Preview />
      </div>
      <footer className="grid shrink-0 grid-cols-2 bg-[#485c7b] leading-[29px] text-[#0d1420]">
        <p>Zugeordnet zu: 998 - E.001.00 Hummelberger, Heribert EG</p>
        <p className="border-l border-[#3f516d] pl-[3px]">Pfad: [Nachweispfad]\1 mahnung_h998_e00100_hummelberger,_heribert_eg_19-11-21_162743688.pdf</p>
      </footer>
    </div>
  );
}
